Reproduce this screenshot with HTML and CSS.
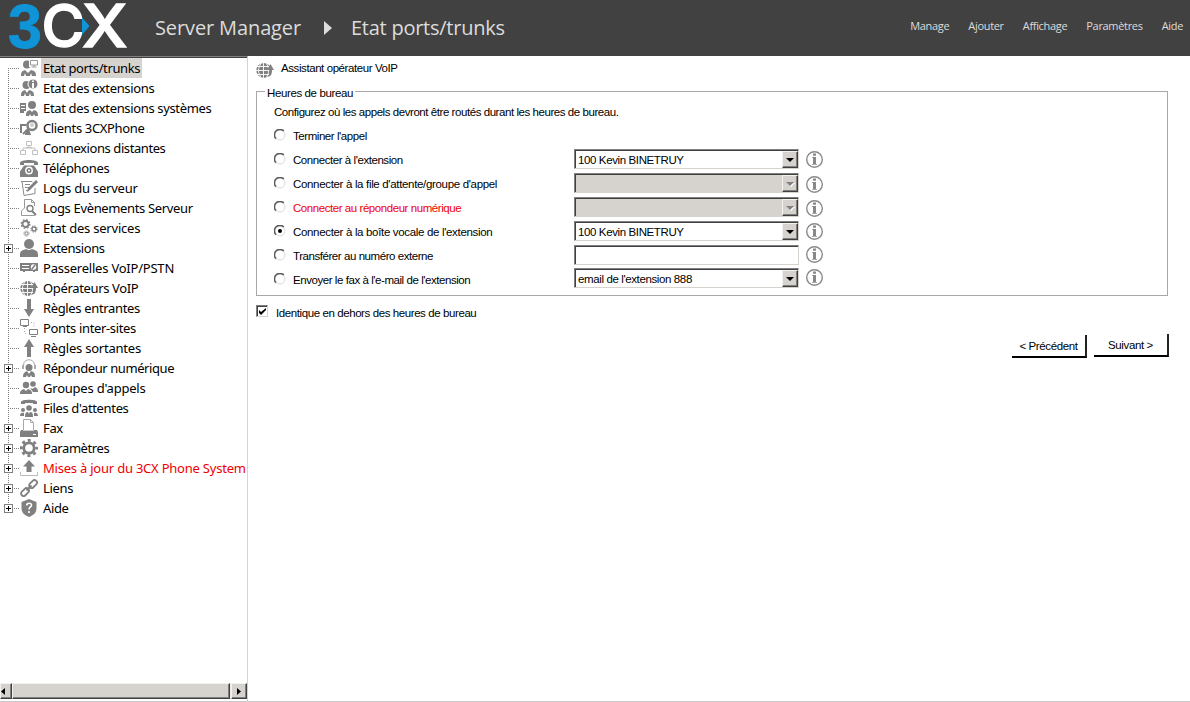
FILE: index.html
```html
<!DOCTYPE html>
<html lang="fr">
<head>
<meta charset="utf-8">
<title>3CX Server Manager</title>
<link rel="stylesheet" href="styles.css">
</head>
<body>
<svg class="defs" width="0" height="0" aria-hidden="true">
  <defs>
    <symbol id="i-ports" viewBox="0 0 18 18"><circle cx="7" cy="5.500" r="4"/><path d="M1 17c0-4 1-5 4-6l3 3 3-3c4 1 5 2 5 6h-4l-1-3-1 3H6l-1-3-1 3z"/><path d="M9 1h9v7H9z" fill="#fff"/><path d="M10.500 1.500h7v4.500h-7zM14 6v2M11.500 8h5" fill="none" stroke="#999"/></symbol>
    <symbol id="i-ext" viewBox="0 0 18 18"><circle cx="6.500" cy="6" r="4"/><path d="M1 17c0-4 1-5 4-6l2 3 2-3c4 1 5 2 5 6h-3l-1-3-1 3H6l-1-3-1 3z"/><circle cx="13" cy="5" r="5" stroke="#fff"/><path d="M13 4v5M13 1.500v1.500" stroke="#fff" stroke-width="2"/></symbol>
    <symbol id="i-sys" viewBox="0 0 18 18"><circle cx="12" cy="6" r="4"/><path d="M6 17c0-4 1-5 4-6l2 2 2-2c3 1 4 2 4 6h-3l-1-2-1 2h-2l-1-2-1 2z"/><path d="M0 4h6v8H4v2H0z"/><path d="M1 6.500h4M1 9.500h4" stroke="#fff"/></symbol>
    <symbol id="i-client" viewBox="0 0 18 18"><path d="M0 5h7l-1 2H2v7H0zM5 16c0-4 2-5 4-6l2 6z"/><circle cx="12" cy="6.500" r="4.500" fill="none" stroke="#808080" stroke-width="2.500"/><path d="m8 10-5 5" stroke="#808080" stroke-width="2"/><circle cx="12" cy="6" r="2" fill="#ccc"/></symbol>
    <symbol id="i-net" viewBox="0 0 18 18"><path d="M6.500 2.500h5v4h-5zM.500 11.500h5v4h-5zM12.500 11.500h5v4h-5zM9 7v2M3 11V9h12v2M6 8.500h6" fill="none" stroke="#c0c0c0"/></symbol>
    <symbol id="i-phone" viewBox="0 0 18 18"><path d="M0 6V4c0-4 18-4 18 0v2h-4V4H4v2z"/><path d="M4 6.500h10l4 6V18H0v-5.500z"/><circle cx="9" cy="11.500" r="3.200" stroke="#fff" stroke-width="1.400"/><circle cx="9" cy="11.500" r="1" fill="#fff"/></symbol>
    <symbol id="i-log" viewBox="0 0 18 18"><path d="M1 2.500h11l1 1M2 2.500l2 14 11-2V9M5 5.500h5M5 8.500h4M6 11.500h2" fill="none" stroke="#8a8a8a"/><path d="m7 13 1-4 8-8 2 2-8 8z"/></symbol>
    <symbol id="i-event" viewBox="0 0 18 18"><path d="M4.500 .5h7l3 3V7M4.500 .5V9L1.500 12v4.500h13V14M11.500 .5v3h3" fill="none" stroke="#999"/><circle cx="10" cy="9.500" r="3" fill="#fff" stroke="#808080" stroke-width="1.400"/><path d="m12 12 4 4" stroke="#808080" stroke-width="2"/></symbol>
    <symbol id="i-gears" viewBox="0 0 18 18"><g fill="none" stroke="#808080"><circle cx="5.500" cy="5" r="3" stroke-width="1.800"/><circle cx="5.500" cy="5" r="4.300" stroke-width="1.300" stroke-dasharray="1.700 1.700"/><circle cx="14" cy="10" r="2" stroke-width="1.500"/><circle cx="14" cy="10" r="3.200" stroke-dasharray="1.250 1.250"/><circle cx="6.500" cy="14.500" r="1.500"/><circle cx="6.500" cy="14.500" r="2.600" stroke-dasharray="1 1"/></g></symbol>
    <symbol id="i-user" viewBox="0 0 18 18"><circle cx="9" cy="5" r="5"/><path d="M0 18v-3c0-3 3-4 6-5q3 2 6 0c3 1 6 2 6 5v3z"/></symbol>
    <symbol id="i-gateway" viewBox="0 0 18 18"><path d="M0 4h18v8h-3v1h-2v-1H5v1H3v-1H0z"/><path d="M2 6.500h7M2 9.500h7" stroke="#fff"/><circle cx="13.500" cy="8" r="2.700" fill="#fff"/><path d="m12 10 3-4" stroke="#808080" stroke-width="1.500"/></symbol>
    <symbol id="i-globe" viewBox="0 0 18 18"><circle cx="7.800" cy="9.500" r="7.500"/><path d="M0 9.500h14M1 5.500h12M1 13.500h12M7.500 2v15M5.500 2c-4 5-4 10 0 15M10 2c3.500 5 3.500 10 0 15" stroke="#fff" fill="none" stroke-width=".9"/><path d="m14.500 3 3.500 6h-2c0 4-1 6-4 7 2-3 2-5 1-7h-2z"/></symbol>
    <symbol id="i-down" viewBox="0 0 18 18"><path d="M7 0h4v10h3l-5 8-5-8h3z"/></symbol>
    <symbol id="i-bridge" viewBox="0 0 18 18"><g fill="none" stroke="#808080"><path d="M.500.500h8v6h-8zM9.500 10.500h8v5h-8zM3 7.500h4M11 17.500h5"/><path d="M11 3.500h3v5M4.500 9v5.500H8" stroke="#aaa" stroke-dasharray="1 2"/></g></symbol>
    <symbol id="i-up" viewBox="0 0 18 18"><path d="M7 18h4V8h3L9 0 4 8h3z"/></symbol>
    <symbol id="i-ivr" viewBox="0 0 18 18"><circle cx="9" cy="8.500" r="3.500"/><path d="M3 18c0-4 2-5 4-6l2 3 2-3c3 1 4 2 4 6h-3l-1-2-1 2H8l-1-2-1 2z"/><path d="M3.500 9V6c0-7 11-7 11 0v3" fill="none" stroke="#aaa"/><path d="M2 6h2v4H2zM14 6h2v4h-2z" fill="#aaa"/></symbol>
    <symbol id="i-group" viewBox="0 0 18 18"><circle cx="6" cy="6" r="3.200"/><circle cx="13" cy="5" r="2.800"/><path d="M0 15c0-4 2-4 4-5l2 2 2-2c3 1 4 2 4 5zM10 9q3 2 5-1c2 1 3 2 3 5h-5z"/></symbol>
    <symbol id="i-queue" viewBox="0 0 18 18"><path d="M1 5V3c0-3 16-3 16 0v2h-4V4H5v1z"/><circle cx="9" cy="9" r="2.800"/><circle cx="3" cy="11" r="2"/><circle cx="15" cy="11" r="2"/><path d="M5 18c0-4 1-5 3-5l1 2 1-2c2 0 3 1 3 5zM0 17c0-3 2-4 4-3v3zM18 17c0-3-2-4-4-3v3z"/></symbol>
    <symbol id="i-fax" viewBox="0 0 18 18"><path d="M3.500 11V.500h7l3 3V11M10.500.500v3h3" fill="none" stroke="#aaa"/><path d="M1 11h16l1 2v5H0v-5z"/><path d="M3 11.500h11" stroke="#ccc"/><path d="M13 15.500h3" stroke="#fff"/></symbol>
    <symbol id="i-gear" viewBox="0 0 18 18"><circle cx="9" cy="9" r="5.200" fill="none" stroke="#808080" stroke-width="2.800"/><circle cx="9" cy="9" r="7.600" fill="none" stroke="#808080" stroke-width="2.800" stroke-dasharray="3 2.970" stroke-dashoffset="1.500"/></symbol>
    <symbol id="i-upload" viewBox="0 0 18 18"><path d="M9 1 3 7.500h3.500V13h5V7.500H15z"/><path d="M.500 13v3.500h17V13" fill="none" stroke="#bbb"/></symbol>
    <symbol id="i-link" viewBox="0 0 18 18"><g fill="none" stroke="#808080" stroke-width="1.800"><rect x="8.500" y="2.600" width="9" height="5" rx="2.500" transform="rotate(-45 13 5)"/><rect x=".5" y="10.600" width="9" height="5" rx="2.500" transform="rotate(-45 5 13)"/><path d="m6.500 11.500 5-5"/></g></symbol>
    <symbol id="i-shield" viewBox="0 0 18 18"><path d="m9 0 7.500 3v6c0 5-3 7-7.500 9-4.500-2-7.500-4-7.500-9V3z"/><path d="M6.700 6.500c0-3 4.800-3 4.800-.3C11.500 8 9 8 9 10.500M9 12v2" fill="none" stroke="#fff" stroke-width="1.600"/></symbol>
    <symbol id="i-info" viewBox="0 0 17 17"><circle cx="8.500" cy="8.500" r="7.800" fill="#fff" stroke="#8a8a8a" stroke-width="1.400"/><path d="M7 2.600h3v2.200H7zM7 6h3v8H7z" fill="#888"/><path d="M6 6.500h1M6 13.500h5" stroke="#aaa"/></symbol>
    <symbol id="i-radio" viewBox="0 0 12 12"><circle cx="6" cy="6" r="5" fill="#fff" stroke="#dedad5"/><path d="M2 9.800A5.300 5.300 0 0 1 9.800 2" fill="none" stroke="#5a5a5a" stroke-width="1.500"/></symbol>
  </defs>
</svg>

<header class="topbar">
  <svg class="logo" width="120" height="48" viewBox="0 0 120 48" role="img" aria-label="3CX">
    <text class="logo-three" x="-1" y="44.500" textLength="34" lengthAdjust="spacingAndGlyphs">3</text>
    <text class="logo-c" x="32.500" y="44" textLength="43" lengthAdjust="spacingAndGlyphs">C</text>
    <text class="logo-c" x="73" y="44" textLength="45.500" lengthAdjust="spacingAndGlyphs">X</text>
    <path d="M73 14.500 80.500 23 73 32z" fill="#0f95d7"/>
  </svg>
  <h1 class="title">Server Manager</h1>
  <svg class="crumb" width="8" height="14" viewBox="0 0 8 14"><path d="M0 0 8 7 0 14z" fill="#dcdcdc"/></svg>
  <h2 class="title section">Etat ports/trunks</h2>
  <nav class="menu"><span>Manage</span><span>Ajouter</span><span>Affichage</span><span>Paramètres</span><span>Aide</span></nav>
</header>

<div class="workspace">
  <aside class="sidebar">
    <ul class="tree">
      <li><svg><use href="#i-ports"/></svg><span class="selected">Etat ports/trunks</span></li>
      <li><svg><use href="#i-ext"/></svg><span>Etat des extensions</span></li>
      <li><svg><use href="#i-sys"/></svg><span>Etat des extensions systèmes</span></li>
      <li><svg><use href="#i-client"/></svg><span>Clients 3CXPhone</span></li>
      <li><svg><use href="#i-net"/></svg><span class="tight">Connexions distantes</span></li>
      <li><svg><use href="#i-phone"/></svg><span>Téléphones</span></li>
      <li><svg><use href="#i-log"/></svg><span class="wide">Logs du serveur</span></li>
      <li><svg><use href="#i-event"/></svg><span>Logs Evènements Serveur</span></li>
      <li><svg><use href="#i-gears"/></svg><span class="wide">Etat des services</span></li>
      <li class="branch"><svg><use href="#i-user"/></svg><span class="tight">Extensions</span></li>
      <li><svg><use href="#i-gateway"/></svg><span class="wide">Passerelles VoIP/PSTN</span></li>
      <li><svg><use href="#i-globe"/></svg><span>Opérateurs VoIP</span></li>
      <li><svg><use href="#i-down"/></svg><span>Règles entrantes</span></li>
      <li><svg><use href="#i-bridge"/></svg><span>Ponts inter-sites</span></li>
      <li><svg><use href="#i-up"/></svg><span class="wide">Règles sortantes</span></li>
      <li class="branch"><svg><use href="#i-ivr"/></svg><span class="tight">Répondeur numérique</span></li>
      <li><svg><use href="#i-group"/></svg><span class="wide">Groupes d'appels</span></li>
      <li><svg><use href="#i-queue"/></svg><span>Files d'attentes</span></li>
      <li class="branch"><svg><use href="#i-fax"/></svg><span>Fax</span></li>
      <li class="branch"><svg><use href="#i-gear"/></svg><span class="tight">Paramètres</span></li>
      <li class="branch alert"><svg><use href="#i-upload"/></svg><span class="wide">Mises à jour du 3CX Phone System</span></li>
      <li class="branch"><svg><use href="#i-link"/></svg><span>Liens</span></li>
      <li class="branch"><svg><use href="#i-shield"/></svg><span>Aide</span></li>
    </ul>
    <div class="scrollbar">
      <div class="bevel scroll-left"><svg width="4" height="7" viewBox="0 0 4 7"><path d="M4 0v7L0 3.500z"/></svg></div>
      <div class="bevel thumb"></div>
      <div class="bevel scroll-right"><svg width="4" height="7" viewBox="0 0 4 7"><path d="M0 0v7l4-3.500z"/></svg></div>
    </div>
  </aside>

  <main class="content">
    <div class="heading"><svg width="18" height="18"><use href="#i-globe"/></svg><span>Assistant opérateur VoIP</span></div>
    <section class="group">
      <span class="legend">Heures de bureau</span>
      <p class="hint">Configurez où les appels devront être routés durant les heures de bureau.</p>
      <div class="option"><svg class="radio"><use href="#i-radio"/></svg><label>Terminer l'appel</label></div>
      <div class="option"><svg class="radio"><use href="#i-radio"/></svg><label>Connecter à l'extension</label>
        <div class="combo"><span>100 Kevin BINETRUY</span><i class="bevel drop"></i></div><svg class="info"><use href="#i-info"/></svg></div>
      <div class="option"><svg class="radio"><use href="#i-radio"/></svg><label class="long">Connecter à la file d'attente/groupe d'appel</label>
        <div class="combo disabled"><span></span><i class="bevel drop"></i></div><svg class="info low"><use href="#i-info"/></svg></div>
      <div class="option"><svg class="radio"><use href="#i-radio"/></svg><label class="alert">Connecter au répondeur numérique</label>
        <div class="combo disabled"><span></span><i class="bevel drop"></i></div><svg class="info low"><use href="#i-info"/></svg></div>
      <div class="option"><svg class="radio"><use href="#i-radio"/><circle cx="6" cy="6" r="2"/></svg><label class="long">Connecter à la boîte vocale de l'extension</label>
        <div class="combo"><span>100 Kevin BINETRUY</span><i class="bevel drop"></i></div><svg class="info"><use href="#i-info"/></svg></div>
      <div class="option"><svg class="radio"><use href="#i-radio"/></svg><label>Transférer au numéro externe</label>
        <div class="combo"></div><svg class="info high"><use href="#i-info"/></svg></div>
      <div class="option"><svg class="radio"><use href="#i-radio"/></svg><label>Envoyer le fax à l'e-mail de l'extension</label>
        <div class="combo raised"><span>email de l'extension 888</span><i class="bevel drop"></i></div><svg class="info higher"><use href="#i-info"/></svg></div>
    </section>
    <div class="same"><span class="check"><svg width="7" height="7" viewBox="0 0 7 7"><path d="M0 2v3l2 2 5-5V0L2 4z"/></svg></span><label>Identique en dehors des heures de bureau</label></div>
    <div class="actions"><div class="button previous">&lt; Précédent</div><div class="button">Suivant &gt;</div></div>
  </main>
</div>
</body>
</html>
```

FILE: styles.css
```css
*, ::before, ::after { box-sizing: border-box; }
body { margin: 0; width: 1190px; height: 702px; overflow: hidden; background: #fff; color: #000; font-family: "Liberation Sans", Arial, sans-serif; font-size: 11.5px; letter-spacing: -.38px; display: flex; flex-direction: column; }
svg { display: block; flex: none; }
.defs { position: absolute; }

.topbar { height: 56px; flex: none; background: #414141; color: #dcdcdc; display: flex; font-family: "Open Sans", "Noto Sans", sans-serif; white-space: nowrap; }
.logo { margin: 3px 0 0 9px; overflow: visible; letter-spacing: 0; }
.logo-three { font: bold 63px "Liberation Sans", sans-serif; fill: #0f95d7; stroke: #0f95d7; stroke-width: .8; }
.logo-c { font: 500 59px "Inter", sans-serif; fill: #fff; stroke: #fff; stroke-width: 1.4; }
.title { margin: 0 0 0 26px; padding-top: 13px; width: 147px; font-size: 20px; line-height: 30px; font-weight: 400; letter-spacing: -.12px; }
.crumb { margin: 21px 0 0 22px; }
.section { margin-left: 19px; width: 200px; letter-spacing: -.25px; }
.menu { margin-left: auto; padding: 17px 7px 0 0; display: flex; gap: 19px; font-size: 11px; line-height: 17px; letter-spacing: -.32px; }

.workspace { flex: 1; display: flex; border-bottom: 1px solid #c8c8c8; }
.sidebar { width: 248px; border-top: 1px solid #808080; border-right: 1px solid #d6d3ce; display: flex; flex-direction: column; }
.tree { list-style: none; margin: 0; padding: 0; border-top: 1px solid #404040; font: 13px "Noto Sans", sans-serif; letter-spacing: -.35px; flex: 1; }
.tree li { height: 20px; padding-left: 20px; display: flex; align-items: center; position: relative; white-space: nowrap; background: repeating-linear-gradient(#808080 0 1px, transparent 1px 2px) 8px 0 / 1px 20px no-repeat; }
.tree li:first-child { background-position: 8px 10px; }
.tree li:last-child { background-size: 1px 10px; }
.tree li::after { content: ""; position: absolute; left: 8px; top: 10px; width: 11px; height: 1px; background: repeating-linear-gradient(90deg, #808080 0 1px, transparent 1px 2px); }
.tree .branch::before { content: ""; position: absolute; left: 4px; top: 6px; width: 9px; height: 9px; border: 1px solid #808080; background: linear-gradient(#000, #000) 1px 3px / 5px 1px no-repeat, linear-gradient(#000, #000) 3px 1px / 1px 5px no-repeat, #fff; }
.tree .branch::after { left: 14px; width: 5px; }
.tree svg { width: 18px; height: 18px; fill: #808080; }
.tree span { margin-left: 3px; padding: 0 2px; height: 20px; line-height: 20px; }
.tree .wide { letter-spacing: -.22px; }
.tree .tight { letter-spacing: -.42px; }
.tree .selected { letter-spacing: -.38px; background: #d6d3ce; }
.alert { color: #f00000; }

.scrollbar { height: 16px; margin-bottom: 2px; display: flex; background: #eeece8; }
.bevel { background: #d6d3ce; border: 1px solid; border-color: #f4f2ee #404040 #404040 #f4f2ee; box-shadow: inset -1px -1px #808080; }
.scroll-left { width: 12px; display: flex; align-items: center; }
.thumb { width: 218px; }
.scroll-right { width: 16px; margin-left: 1px; display: flex; align-items: center; justify-content: center; }

.content { flex: 1; padding-left: 8px; white-space: nowrap; }
.heading { height: 35px; padding-top: 4px; display: flex; gap: 7px; }
.heading svg { margin-top: 1px; fill: #808080; }
.heading span { line-height: 16px; letter-spacing: -.42px; }
.group { width: 912px; height: 205px; border: 1px solid #a8a8a8; padding-left: 17px; display: flex; flex-direction: column; }
.legend { align-self: flex-start; margin: -7px 0 0 -9px; padding: 0 2px; height: 16px; line-height: 16px; background: #fff; }
.hint { margin: 3px 0; line-height: 16px; height: 16px; letter-spacing: -.44px; }
.option { height: 24px; display: flex; align-items: center; flex: none; }
.radio { width: 12px; height: 12px; }
.option label { width: 281px; margin: 2px 0 0 7px; letter-spacing: -.44px; }
.option .long { letter-spacing: -.33px; }
.combo { width: 225px; height: 20px; display: flex; border: 1px solid; border-color: #808080 #d6d3ce #d6d3ce #808080; box-shadow: inset 1px 1px #404040; }
.combo span { flex: 1; padding: 2px 0 0 3px; line-height: 16px; }
.drop { width: 16px; height: 17px; margin-top: 1px; display: flex; align-items: center; justify-content: center; }
.drop::after { content: ""; border: 4px solid transparent; border-top-color: #000; border-bottom: 0; }
.disabled { background: #d6d3ce; }
.disabled .drop::after { border-top-color: #808080; filter: drop-shadow(1px 1px #fff); }
.raised { position: relative; top: -1px; }
.info { width: 17px; height: 17px; margin-left: 7px; }
.low { margin-top: 2px; }
.high { margin-bottom: 1px; }
.higher { margin-bottom: 3px; }
.same { margin-top: 9px; height: 16px; display: flex; align-items: flex-start; gap: 8px; line-height: 16px; letter-spacing: -.41px; }
.check { width: 12px; height: 12px; display: flex; align-items: center; justify-content: center; border: 1px solid; border-color: #808080 #d6d3ce #d6d3ce #808080; box-shadow: inset 1px 1px #404040; }
.actions { width: 913px; margin-top: 13px; display: flex; justify-content: flex-end; gap: 7px; }
.button { width: 75px; height: 23px; border-right: 2px solid #222; border-bottom: 2px solid #000; text-align: center; line-height: 23px; }
.previous { margin-top: 1px; }
```
